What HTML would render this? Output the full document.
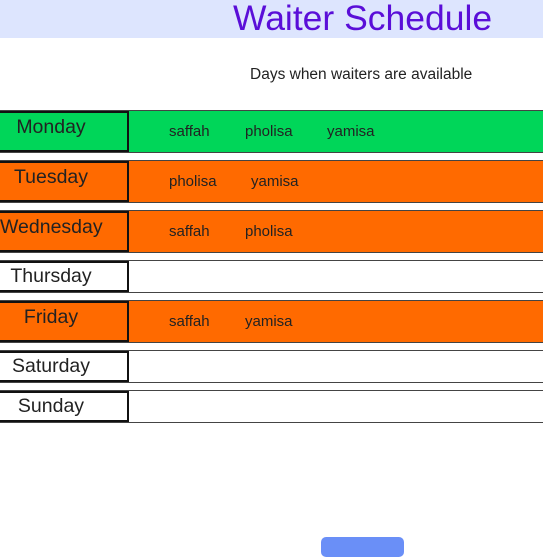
<!DOCTYPE html>
<html><head><style>
body{margin:0;width:543px;height:543px;overflow:hidden;background:#fff;font-family:"Liberation Sans",sans-serif;position:relative;color:#222}
.hdr{position:absolute;left:0;top:0;width:543px;height:38px;background:#dde5fe}
.title{position:absolute;left:233px;top:-2px;font-size:35.5px;color:#5a0ed8;white-space:nowrap}
.sub{position:absolute;left:250px;top:66px;font-size:15.5px;color:#222;white-space:nowrap}
.row{position:absolute;left:0;width:543px;border-top:1px solid #444;border-bottom:1px solid #444;box-sizing:border-box}
.day{position:absolute;left:-2px;top:0;width:131px;bottom:0;border:2px solid #111;box-sizing:border-box;font-size:19.5px}
.day span{position:absolute;left:0;width:102px;text-align:center;white-space:nowrap}
.n{position:absolute;font-size:15px;color:#222}
.g{background:#00d659}.o{background:#ff6a00}
</style></head><body>
<div class="hdr"></div>
<div class="title">Waiter Schedule</div>
<div class="sub">Days when waiters are available</div>

<div class="row g" style="top:110px;height:43px"><div class="day"><span style="top:3px">Monday</span></div>
<span class="n" style="left:169px;top:12px">saffah</span><span class="n" style="left:245px;top:12px">pholisa</span><span class="n" style="left:327px;top:12px">yamisa</span></div>

<div class="row o" style="top:160px;height:43px"><div class="day"><span style="top:3px">Tuesday</span></div>
<span class="n" style="left:169px;top:12px">pholisa</span><span class="n" style="left:251px;top:12px">yamisa</span></div>

<div class="row o" style="top:210px;height:43px"><div class="day"><span style="top:3px">Wednesday</span></div>
<span class="n" style="left:169px;top:12px">saffah</span><span class="n" style="left:245px;top:12px">pholisa</span></div>

<div class="row" style="top:260px;height:33px"><div class="day"><span style="top:2px">Thursday</span></div></div>

<div class="row o" style="top:300px;height:43px"><div class="day"><span style="top:3px">Friday</span></div>
<span class="n" style="left:169px;top:12px">saffah</span><span class="n" style="left:245px;top:12px">yamisa</span></div>

<div class="row" style="top:350px;height:33px"><div class="day"><span style="top:2px">Saturday</span></div></div>

<div class="row" style="top:390px;height:33px"><div class="day"><span style="top:2px">Sunday</span></div></div>

<div style="position:absolute;left:321px;top:537px;width:83px;height:20px;background:#6a8ff7;border-radius:5px"></div>
</body></html>
